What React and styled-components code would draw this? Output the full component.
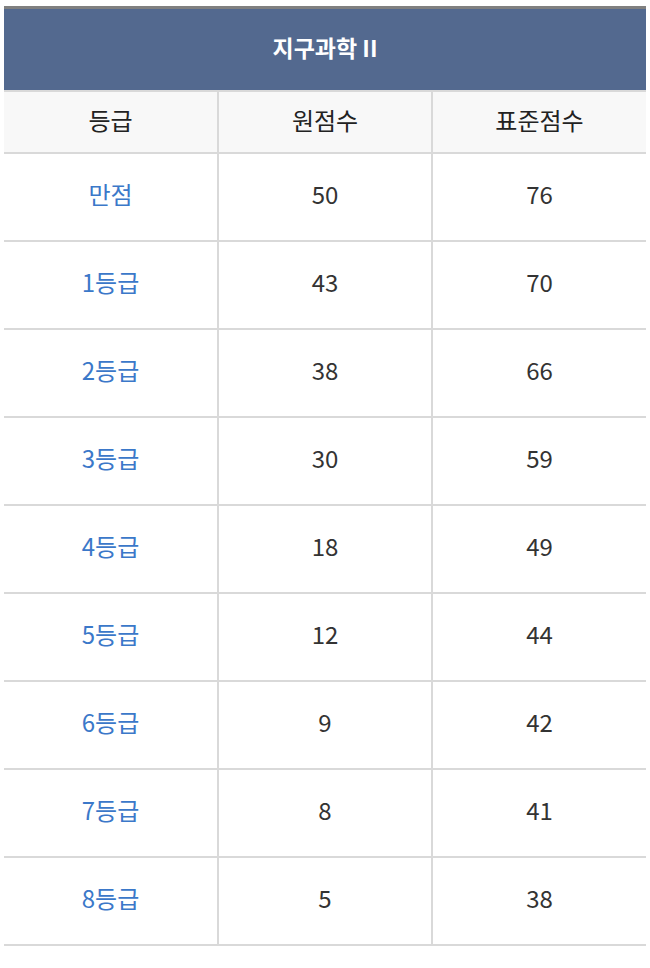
import React from 'react';
import styled, { createGlobalStyle } from 'styled-components';

const rows = [
  ['만점', '50', '76'],
  ['1등급', '43', '70'],
  ['2등급', '38', '66'],
  ['3등급', '30', '59'],
  ['4등급', '18', '49'],
  ['5등급', '12', '44'],
  ['6등급', '9', '42'],
  ['7등급', '8', '41'],
  ['8등급', '5', '38'],
];

const GlobalStyle = createGlobalStyle`
  body {
    margin: 0;
    background: #fff;
    font-family: "Noto Sans CJK KR", "Noto Sans", sans-serif;
  }
`;

const Page = () => (
  <Wrapper>
    <GlobalStyle />
    <Table>
      <thead>
        <tr>
          <Title colSpan={3}>지구과학 II</Title>
        </tr>
        <tr>
          <Head>등급</Head>
          <Head>원점수</Head>
          <Head>표준점수</Head>
        </tr>
      </thead>
      <tbody>
        {rows.map(([grade, raw, std]) => (
          <tr key={grade}>
            <Cell $accent>{grade}</Cell>
            <Cell>{raw}</Cell>
            <Cell>{std}</Cell>
          </tr>
        ))}
      </tbody>
    </Table>
  </Wrapper>
);

const Wrapper = styled.div`
  padding: 6px 4px 0;
`;

const Table = styled.table`
  width: 100%;
  border-collapse: collapse;
  table-layout: fixed;
  border-top: 3px solid #808080;
`;

const Title = styled.th`
  height: 76px;
  padding: 0 0 5px;
  background: #53698f;
  color: #fff;
  font-size: 23px;
  font-weight: 700;
  text-align: center;
  border-bottom: 2px solid #d9d9d9;
`;

const Head = styled.th`
  height: 55px;
  padding: 0 0 5px;
  background: #f8f8f8;
  color: #222;
  font-size: 24px;
  font-weight: 400;
  text-align: center;
  border-bottom: 2px solid #d9d9d9;
  & + & {
    border-left: 2px solid #d9d9d9;
  }
`;

const Cell = styled.td`
  height: 79px;
  padding: 0 0 7px;
  text-align: center;
  font-size: 24px;
  color: ${(p) => (p.$accent ? '#3b78c9' : '#333')};
  border-bottom: 2px solid #d9d9d9;
  & + & {
    border-left: 2px solid #d9d9d9;
  }
`;

export default Page;
